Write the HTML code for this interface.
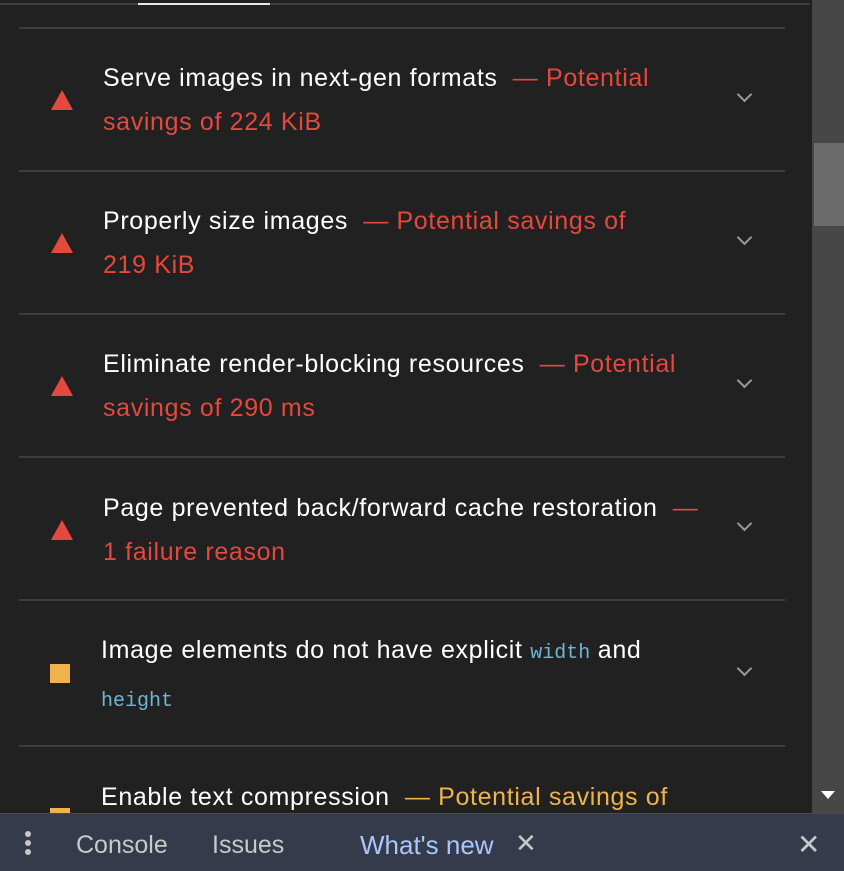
<!DOCTYPE html><html><head><style>
body{margin:0;width:844px;height:870px;background:#212121;position:relative;overflow:hidden;font-family:"Liberation Sans",Arial,sans-serif;}
.a{position:absolute}
.hl{position:absolute;left:19px;width:766px;height:2px;background:#3d3d3d}
.t{position:absolute;left:103px;font-size:25px;letter-spacing:0.65px;line-height:44px;color:#fff;white-space:nowrap}
.r{color:#e5483d}.o{color:#f0b24b}
.code{font-family:"Liberation Mono",monospace;font-size:20px;letter-spacing:0;color:#6cb6d5}
.tri{position:absolute;left:51px;width:0;height:0;border-left:11px solid transparent;border-right:11px solid transparent;border-bottom:20px solid #e5483d}
.sq{position:absolute;left:50px;width:20px;height:19px;background:#f0b24b}
.ch{position:absolute;left:739px;width:9px;height:9px;border-right:2px solid #9a9a9a;border-bottom:2px solid #9a9a9a;transform:rotate(45deg)}
</style></head><body>
<div class="a" style="left:0;top:3px;width:810px;height:2px;background:#3d3d3d"></div>
<div class="a" style="left:138px;top:3px;width:132px;height:2px;background:#e8e8e8"></div>
<div class="a" style="left:812px;top:0;width:32px;height:813px;background:#474747"></div>
<div class="a" style="left:814px;top:143px;width:30px;height:83px;background:#6b6b6b"></div>
<div class="a" style="left:821px;top:791px;width:0;height:0;border-left:7px solid transparent;border-right:7px solid transparent;border-top:8px solid #fff"></div>

<div class="hl" style="top:27px"></div>
<div class="t" style="top:56px">Serve images in next-gen formats <span class="r">&nbsp;— Potential<br>savings of 224 KiB</span></div>
<div class="tri" style="top:90px"></div><div class="ch" style="top:89px"></div>

<div class="hl" style="top:170px"></div>
<div class="t" style="top:199px">Properly size images <span class="r">&nbsp;— Potential savings of<br>219 KiB</span></div>
<div class="tri" style="top:233px"></div><div class="ch" style="top:232px"></div>

<div class="hl" style="top:313px"></div>
<div class="t" style="top:342px">Eliminate render-blocking resources <span class="r">&nbsp;— Potential<br>savings of 290 ms</span></div>
<div class="tri" style="top:376px"></div><div class="ch" style="top:375px"></div>

<div class="hl" style="top:456px"></div>
<div class="t" style="top:486px">Page prevented back/forward cache restoration <span class="r">&nbsp;—<br>1 failure reason</span></div>
<div class="tri" style="top:520px"></div><div class="ch" style="top:518px"></div>

<div class="hl" style="top:599px"></div>
<div class="t" style="top:628px;left:101px">Image elements do not have explicit <span class="code">width</span> and<br><span class="code">height</span></div>
<div class="sq" style="top:664px"></div><div class="ch" style="top:663px"></div>

<div class="hl" style="top:745px"></div>
<div class="t" style="top:775px;left:101px">Enable text compression <span class="o">&nbsp;— Potential savings of</span></div>
<div class="sq" style="top:808px"></div>

<div class="a" style="left:0;top:813px;width:844px;height:57px;background:#353b4a;border-top:1px solid #454b5a"></div>
<div class="a" style="left:25px;top:831px;width:6px;height:6px;border-radius:3px;background:#c8c8c8;box-shadow:0 9px 0 #c8c8c8,0 18px 0 #c8c8c8"></div>
<div class="a" style="left:76px;top:831px;font-size:25px;color:#c9c9c9">Console</div>
<div class="a" style="left:212px;top:831px;font-size:25px;color:#c9c9c9">Issues</div>
<div class="a" style="left:360px;top:830px;font-size:26px;color:#a8c7fa">What's new</div>
<div class="a" style="left:515px;top:828px;font-size:26px;color:#c9c9c9">✕</div>
<div class="a" style="left:797px;top:828px;font-size:28px;color:#c9c9c9">✕</div>
</body></html>
